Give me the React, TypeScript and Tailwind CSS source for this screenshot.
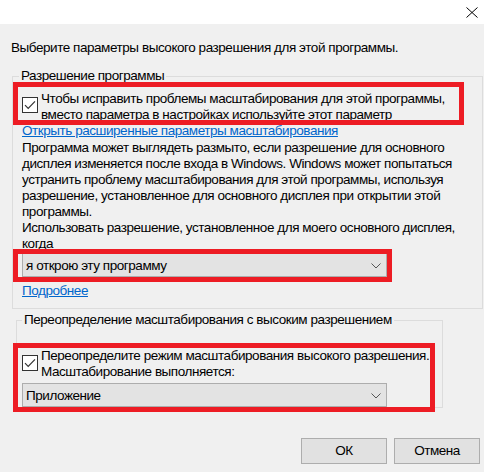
function CheckBox() {
  return (
    <span className="flex h-[16px] w-[16px] shrink-0 items-center justify-center border border-[#333333] bg-white">
      <svg width="12" height="10" viewBox="0 0 12 10" fill="none">
        <path d="M1 5.2 L4.2 8.4 L11 1.4" stroke="#333333" strokeWidth="1.2" />
      </svg>
    </span>
  );
}

function Combo({ value }: { value: string }) {
  return (
    <div className="flex h-[24px] w-[365px] items-start justify-between border border-[#adadad] bg-[#e3e3e3] pl-[3px] pr-[5px] pt-[4px]">
      <span>{value}</span>
      <svg width="10" height="6" viewBox="0 0 10 6" fill="none" className="mt-[5px]">
        <path d="M0.5 0.5 L5 5 L9.5 0.5" stroke="#555555" strokeWidth="1" />
      </svg>
    </div>
  );
}

export default function App() {
  return (
    <div className="relative flex h-[472px] w-[484px] flex-col overflow-hidden bg-[#f0f0f0] font-['Liberation_Sans',Arial,sans-serif] text-[13.5px] leading-[16px] tracking-[-0.45px] text-black">
      {/* title bar */}
      <div className="flex h-[24px] shrink-0 items-start justify-end bg-white pr-[6px] pt-[7px]">
        <svg width="12" height="11" viewBox="0 0 12 11" fill="none">
          <path d="M0.5 0.5 L11.5 10.5 M11.5 0.5 L0.5 10.5" stroke="#000" strokeWidth="1" />
        </svg>
      </div>

      <p className="ml-[11px] mt-[16px] whitespace-nowrap">
        Выберите параметры высокого разрешения для этой программы.
      </p>

      <fieldset className="ml-[12px] mt-[12px] h-[241px] w-[471px] border border-[#dcdcdc]">
        <legend className="ml-[6px] whitespace-nowrap px-[2px]">Разрешение программы</legend>
        <div className="mt-[7px] flex items-start gap-[3px] pl-[9px]">
          <span className="mt-[6px]">
            <CheckBox />
          </span>
          <span className="whitespace-nowrap">
            Чтобы исправить проблемы масштабирования для этой программы,
            <br />
            вместо параметра в настройках используйте этот параметр
          </span>
        </div>
        <div className="pl-[9px]">
          <a className="text-[#0066cc] underline">Открыть расширенные параметры масштабирования</a>
          <p className="mt-[1px] whitespace-nowrap">
            Программа может выглядеть размыто, если разрешение для основного
            <br />
            дисплея изменяется после входа в Windows. Windows может попытаться
            <br />
            устранить проблему масштабирования для этой программы, используя
            <br />
            разрешение, установленное для основного дисплея при открытии этой
            <br />
            программы.
            <br />
            Использовать разрешение, установленное для моего основного дисплея,
            <br />
            когда
          </p>
          <div className="mt-[1px]">
            <Combo value="я открою эту программу" />
          </div>
          <a className="mt-[6px] inline-block text-[#0066cc] underline">Подробнее</a>
        </div>
      </fieldset>

      <fieldset className="ml-[16px] mt-[3px] h-[96px] w-[423px] border border-[#dcdcdc]">
        <legend className="ml-[5px] whitespace-nowrap px-[2px]">
          Переопределение масштабирования с высоким разрешением
        </legend>
        <div className="relative mt-[20px] flex w-[425px] items-start gap-[3px] bg-[#f0f0f0] pl-[5px]">
          <span className="mt-[7px]">
            <CheckBox />
          </span>
          <span className="whitespace-nowrap">
            Переопределите режим масштабирования высокого разрешения.
            <br />
            Масштабирование выполняется:
          </span>
        </div>
        <div className="relative mt-[3px] pl-[5px]">
          <Combo value="Приложение" />
        </div>
      </fieldset>

      <div className="mt-[30px] flex justify-end gap-[7px] pr-[4px]">
        <button className="flex h-[26px] w-[86px] items-center justify-center border border-[#adadad] bg-[#e1e1e1]">
          ОК
        </button>
        <button className="flex h-[26px] w-[86px] items-center justify-center border border-[#adadad] bg-[#e1e1e1]">
          Отмена
        </button>
      </div>

      {/* red annotation frames */}
      <div className="pointer-events-none absolute left-[13px] top-[82px] h-[43px] w-[451px] border-[5px] border-[#ed1c24]" />
      <div className="pointer-events-none absolute left-[13px] top-[249px] h-[33px] w-[379px] border-[5px] border-[#ed1c24]" />
      <div className="pointer-events-none absolute left-[13px] top-[343px] h-[69px] w-[422px] border-[5px] border-[#ed1c24]" />
    </div>
  );
}
